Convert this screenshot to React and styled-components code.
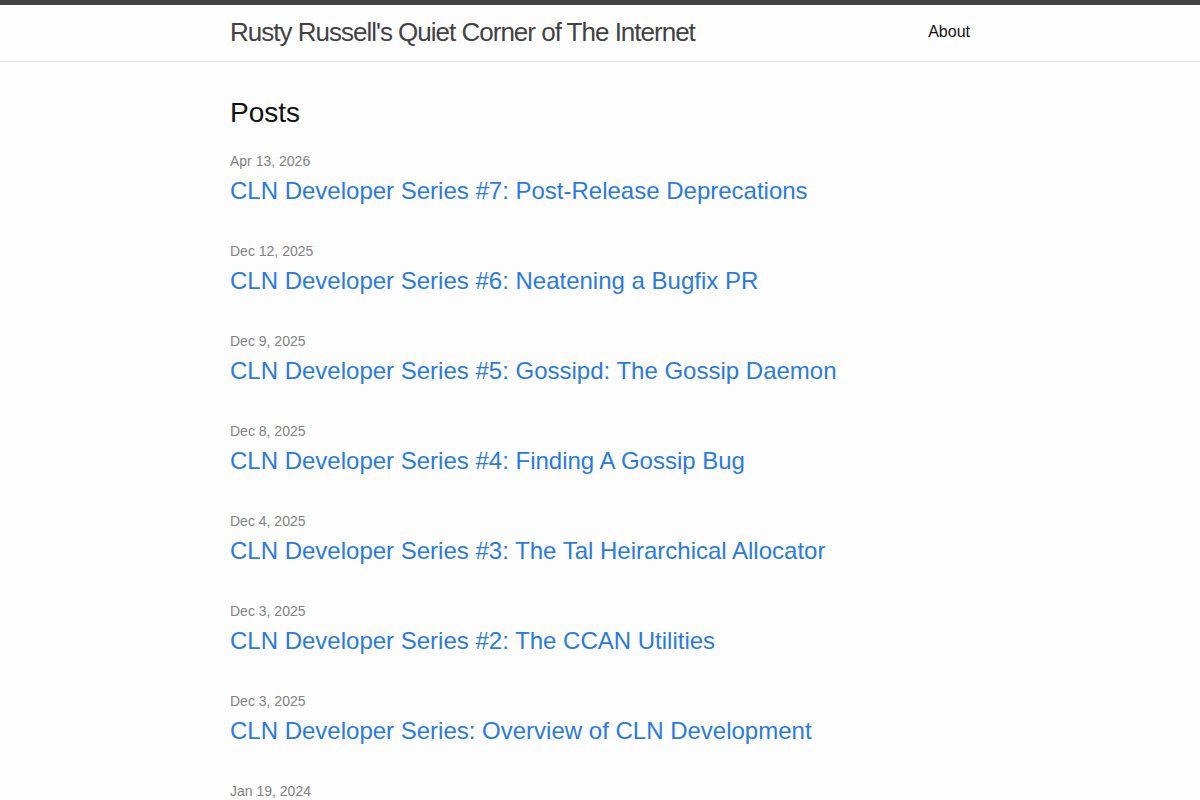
import React from "react";
import styled, { createGlobalStyle } from "styled-components";

const GlobalStyle = createGlobalStyle`
  html, body { margin: 0; padding: 0; }
  body {
    background: #fdfdfd;
    color: #111;
    font: 400 16px/1.5 "Liberation Sans", Arial, sans-serif;
  }
`;

const posts = [
  ["Apr 13, 2026", "CLN Developer Series #7: Post-Release Deprecations"],
  ["Dec 12, 2025", "CLN Developer Series #6: Neatening a Bugfix PR"],
  ["Dec 9, 2025", "CLN Developer Series #5: Gossipd: The Gossip Daemon"],
  ["Dec 8, 2025", "CLN Developer Series #4: Finding A Gossip Bug"],
  ["Dec 4, 2025", "CLN Developer Series #3: The Tal Heirarchical Allocator"],
  ["Dec 3, 2025", "CLN Developer Series #2: The CCAN Utilities"],
  ["Dec 3, 2025", "CLN Developer Series: Overview of CLN Development"],
  ["Jan 19, 2024", "Older posts"],
];

const Header = styled.header`
  border-top: 5px solid #424242;
  border-bottom: 1px solid #e8e8e8;
  min-height: 56px;
`;

const Wrapper = styled.div`
  max-width: 740px;
  margin: 0 auto;
  padding: 0 30px;
`;

const HeaderInner = styled(Wrapper)`
  display: flex;
  justify-content: space-between;
  align-items: center;
`;

const SiteTitle = styled.a`
  font-size: 26px;
  font-weight: 300;
  line-height: 54px;
  letter-spacing: -1px;
  color: #424242;
  text-decoration: none;
`;

const NavLink = styled.a`
  line-height: 54px;
  color: #111;
  text-decoration: none;
`;

const Main = styled.main`
  padding: 30px 0;
`;

const Heading = styled.h2`
  font-size: 28px;
  font-weight: 400;
  line-height: 42px;
  margin: 0 0 16px;
`;

const List = styled.ul`
  list-style: none;
  margin: 0;
  padding: 0;
`;

const Item = styled.li`
  margin-bottom: 31px;
`;

const Meta = styled.span`
  display: block;
  font-size: 14px;
  line-height: 23px;
  color: #828282;
`;

const Title = styled.h3`
  margin: 0;
  font-size: 24px;
  font-weight: 400;
  line-height: 36px;
`;

const PostLink = styled.a`
  color: #2a7ae2;
  text-decoration: none;
`;

export default function App() {
  return (
    <>
      <GlobalStyle />
      <Header>
        <HeaderInner>
          <SiteTitle href="#">Rusty Russell's Quiet Corner of The Internet</SiteTitle>
          <nav>
            <NavLink href="#">About</NavLink>
          </nav>
        </HeaderInner>
      </Header>
      <Main>
        <Wrapper>
          <Heading>Posts</Heading>
          <List>
            {posts.map(([date, title], i) => (
              <Item key={i}>
                <Meta>{date}</Meta>
                <Title>
                  <PostLink href="#">{title}</PostLink>
                </Title>
              </Item>
            ))}
          </List>
        </Wrapper>
      </Main>
    </>
  );
}
